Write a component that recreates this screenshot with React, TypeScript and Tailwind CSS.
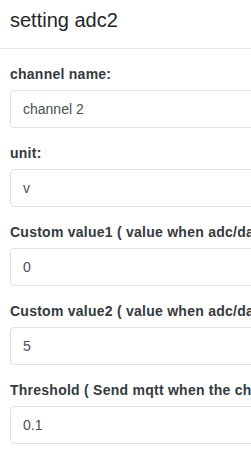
import React from "react";

const FIELDS = [
  { label: "channel name:", value: "channel 2" },
  { label: "unit:", value: "v" },
  { label: "Custom value1 ( value when adc/dac is 0 )", value: "0" },
  { label: "Custom value2 ( value when adc/dac is max )", value: "5" },
  {
    label: "Threshold ( Send mqtt when the change exceeds this value )",
    value: "0.1",
  },
];

export default function App() {
  return (
    <div className="h-[471px] w-[251px] overflow-hidden bg-white font-['Liberation_Sans',Arial,sans-serif] text-[#212529]">
      <div className="w-[520px]">
        <header className="h-[49px] border-b border-[#e9ecef] px-[10px]">
          <h5 className="pt-[5px] text-[20px] leading-[30px] font-normal text-[#23272b]">
            setting adc2
          </h5>
        </header>

        <div className="flex flex-col gap-[15px] px-[10px] pt-[15px]">
          {FIELDS.map((f) => (
            <div key={f.label} className="flex flex-col">
              <label className="mb-[5px] whitespace-nowrap text-[14px] leading-[21px] font-bold tracking-[0.25px] text-[#343a40]">
                {f.label}
              </label>
              <input
                readOnly
                defaultValue={f.value}
                className="h-[38px] w-full rounded-[4px] border border-[#dfe2e5] bg-white px-[12px] text-[14px] text-[#495057] outline-none"
              />
            </div>
          ))}
        </div>
      </div>
    </div>
  );
}
